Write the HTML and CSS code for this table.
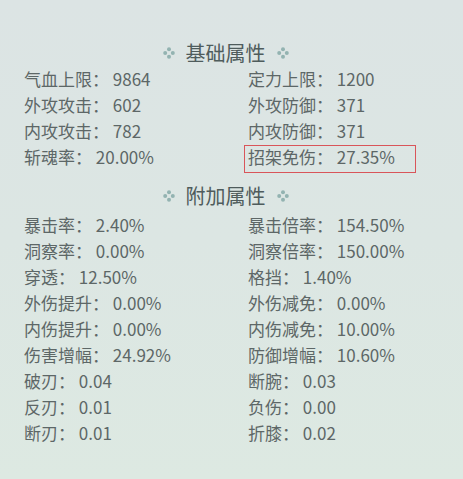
FILE: index.html
```html
<!DOCTYPE html>
<html lang="zh-CN">
<head>
<meta charset="utf-8">
<title>属性</title>
<link rel="stylesheet" href="styles.css">
</head>
<body>
<div class="panel">
  <h2 class="title">
    <svg class="deco" viewBox="0 0 12 12" width="12" height="12"><circle cx="6" cy="2.2" r="2"/><circle cx="2.2" cy="6" r="2"/><circle cx="9.8" cy="6" r="2"/><circle cx="6" cy="9.8" r="2"/></svg>
    <span>基础属性</span>
    <svg class="deco" viewBox="0 0 12 12" width="12" height="12"><circle cx="6" cy="2.2" r="2"/><circle cx="2.2" cy="6" r="2"/><circle cx="9.8" cy="6" r="2"/><circle cx="6" cy="9.8" r="2"/></svg>
  </h2>
  <div class="grid">
    <div class="cell">气血上限： 9864</div><div class="cell">定力上限： 1200</div>
    <div class="cell">外攻攻击： 602</div><div class="cell">外攻防御： 371</div>
    <div class="cell">内攻攻击： 782</div><div class="cell">内攻防御： 371</div>
    <div class="cell">斩魂率： 20.00%</div><div class="cell marked">招架免伤： 27.35%</div>
  </div>
  <h2 class="title second">
    <svg class="deco" viewBox="0 0 12 12" width="12" height="12"><circle cx="6" cy="2.2" r="2"/><circle cx="2.2" cy="6" r="2"/><circle cx="9.8" cy="6" r="2"/><circle cx="6" cy="9.8" r="2"/></svg>
    <span>附加属性</span>
    <svg class="deco" viewBox="0 0 12 12" width="12" height="12"><circle cx="6" cy="2.2" r="2"/><circle cx="2.2" cy="6" r="2"/><circle cx="9.8" cy="6" r="2"/><circle cx="6" cy="9.8" r="2"/></svg>
  </h2>
  <div class="grid">
    <div class="cell">暴击率： 2.40%</div><div class="cell">暴击倍率： 154.50%</div>
    <div class="cell">洞察率： 0.00%</div><div class="cell">洞察倍率： 150.00%</div>
    <div class="cell">穿透： 12.50%</div><div class="cell">格挡： 1.40%</div>
    <div class="cell">外伤提升： 0.00%</div><div class="cell">外伤减免： 0.00%</div>
    <div class="cell">内伤提升： 0.00%</div><div class="cell">内伤减免： 10.00%</div>
    <div class="cell">伤害增幅： 24.92%</div><div class="cell">防御增幅： 10.60%</div>
    <div class="cell">破刃： 0.04</div><div class="cell">断腕： 0.03</div>
    <div class="cell">反刃： 0.01</div><div class="cell">负伤： 0.00</div>
    <div class="cell">断刃： 0.01</div><div class="cell">折膝： 0.02</div>
  </div>
</div>
</body>
</html>
```
FILE: styles.css
```css
html, body {
  margin: 0;
  padding: 0;
}
body {
  width: 463px;
  height: 479px;
  overflow: hidden;
  background: linear-gradient(180deg, #dce4e4 0%, #dce6e3 50%, #dde9e2 100%);
  font-family: "Noto Sans CJK SC", "Noto Sans", sans-serif;
  color: #5d6767;
}
.panel {
  padding-top: 40px;
}
.title {
  margin: 0;
  height: 26px;
  display: flex;
  align-items: center;
  justify-content: center;
  gap: 11px;
  padding-right: 12px;
  font-size: 20px;
  font-weight: 400;
  line-height: 26px;
  color: #4f5c5c;
}
.title.second {
  margin-top: 13px;
  margin-bottom: 3px;
}
.deco {
  fill: #93b3b1;
}
.grid {
  display: grid;
  grid-template-columns: 224px 1fr;
  padding-left: 24px;
}
.cell {
  height: 26px;
  line-height: 26px;
  font-size: 17px;
  white-space: nowrap;
}
.marked {
  position: relative;
}
.marked::before {
  content: "";
  position: absolute;
  left: -4px;
  top: 1px;
  width: 172px;
  height: 28px;
  box-sizing: border-box;
  border: 1px solid #d9555a;
}
```
